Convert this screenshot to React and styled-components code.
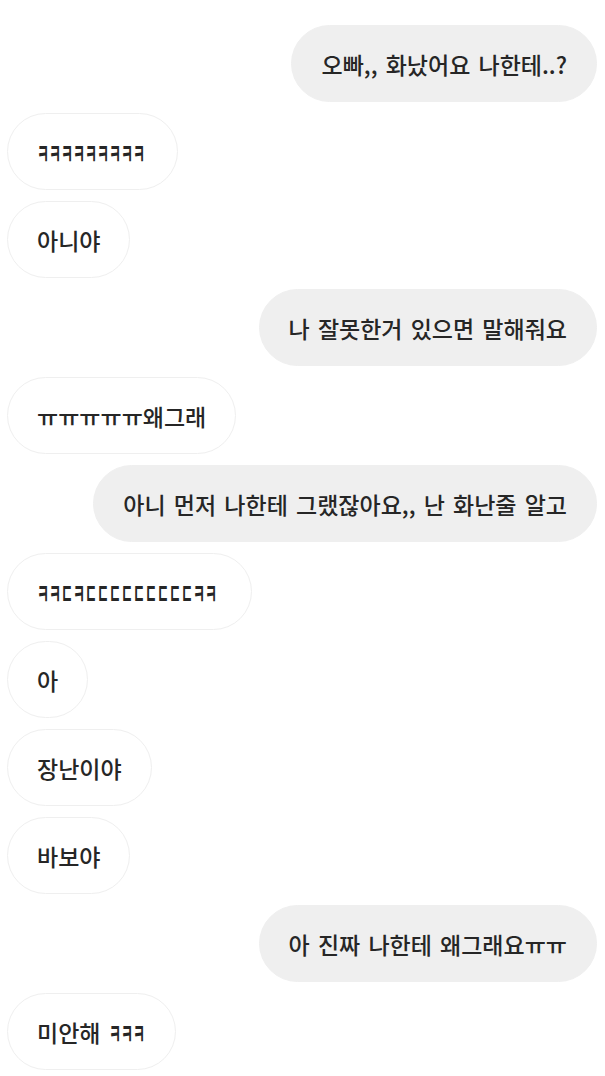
import React from 'react';
import styled, { createGlobalStyle } from 'styled-components';

const GlobalStyle = createGlobalStyle`
  html, body {
    margin: 0;
    padding: 0;
    background: #ffffff;
  }
  body {
    font-family: 'Noto Sans CJK KR', 'Noto Sans', sans-serif;
    color: #262626;
  }
`;

const ChatBlock = styled.div`
  display: flex;
  flex-direction: column;
  gap: 11px;
  padding: 25px 8px 0 7px;
`;

const Row = styled.div`
  display: flex;
  justify-content: ${({ mine }) => (mine ? 'flex-end' : 'flex-start')};
`;

const Bubble = styled.div`
  box-sizing: border-box;
  height: 77px;
  display: flex;
  align-items: center;
  padding: 0 29px;
  border-radius: 39px;
  font-size: 23px;
  font-weight: 500;
  word-spacing: 3px;
  white-space: pre;
  background: ${({ mine }) => (mine ? '#efefef' : '#ffffff')};
  border: 1px solid #efefef;
`;

// ㅋ, ㄷ are drawn tall and narrow in the original keyboard font
const SQUEEZE = 0.45;

const Jamo = styled.span`
  display: inline-block;
  font-size: 29px;
  font-weight: 700;
  transform: scaleX(${SQUEEZE});
  transform-origin: left center;
  margin-right: ${({ count }) => -count * 0.9 * (1 - SQUEEZE)}em;
`;

const splitJamo = (text) =>
  text.split(/([ㅋㄷ]+)/).map((part, i) =>
    /^[ㅋㄷ]+$/.test(part) ? (
      <Jamo key={i} count={part.length}>
        {part}
      </Jamo>
    ) : (
      part
    )
  );

const messages = [
  { mine: true, text: '오빠,, 화났어요 나한테..?' },
  { mine: false, text: 'ㅋㅋㅋㅋㅋㅋㅋㅋㅋ' },
  { mine: false, text: '아니야' },
  { mine: true, text: '나 잘못한거 있으면 말해줘요' },
  { mine: false, text: 'ㅠㅠㅠㅠㅠ왜그래' },
  { mine: true, text: '아니 먼저 나한테 그랬잖아요,, 난 화난줄 알고' },
  { mine: false, text: 'ㅋㅋㄷㅋㄷㄷㄷㄷㄷㄷㄷㄷㄷㅋㅋ' },
  { mine: false, text: '아' },
  { mine: false, text: '장난이야' },
  { mine: false, text: '바보야' },
  { mine: true, text: '아 진짜 나한테 왜그래요ㅠㅠ' },
  { mine: false, text: '미안해 ㅋㅋㅋ' },
];

function App() {
  return (
    <>
      <GlobalStyle />
      <ChatBlock>
        {messages.map((item, index) => (
          <Row key={index} mine={item.mine}>
            <Bubble mine={item.mine}>{splitJamo(item.text)}</Bubble>
          </Row>
        ))}
      </ChatBlock>
    </>
  );
}

export default App;
